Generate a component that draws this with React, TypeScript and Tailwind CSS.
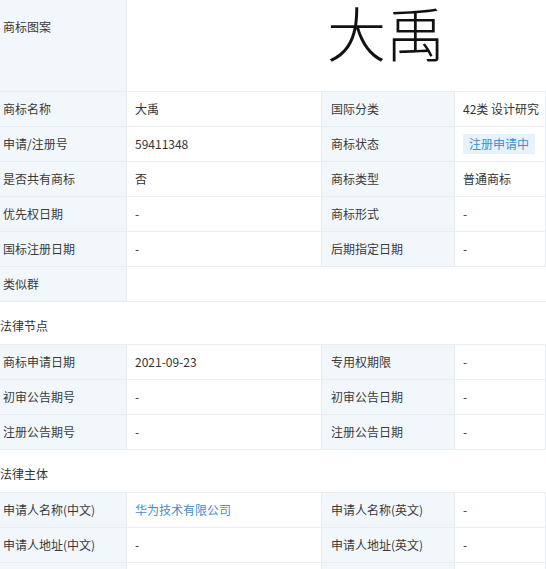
import React from "react";

const font = { fontFamily: '"Noto Sans CJK SC", "Noto Sans", sans-serif' };

function Label({ children, second }: { children?: React.ReactNode; second?: boolean }) {
  return (
    <div
      className={
        "flex h-[35px] items-center whitespace-nowrap border-b border-r border-[#e8edf2] bg-[#f2f7fc] text-[12px] text-[#3a3a3a] " +
        (second ? "pl-[9px]" : "pl-[3px]")
      }
    >
      {children}
    </div>
  );
}

function Value({ children, span }: { children?: React.ReactNode; span?: boolean }) {
  return (
    <div
      className={
        "flex h-[35px] items-center border-b border-[#e8edf2] bg-white pl-[8px] text-[12px] text-[#333] " +
        (span ? "col-span-3" : "border-r")
      }
    >
      {children}
    </div>
  );
}

function Section({ title }: { title: string }) {
  return (
    <div className="col-span-4 flex h-[43px] items-center border-b border-[#e8edf2] bg-white pt-[6px] text-[12px] text-[#333]">
      <span>{title}</span>
    </div>
  );
}

export default function App() {
  return (
    <div className="h-[569px] w-[546px] overflow-hidden bg-white" style={font}>
      <div className="grid grid-cols-[127px_195px_133px_91px]">
        <div className="h-[92px] border-b border-r border-[#e8edf2] bg-[#f2f7fc] pl-[3px] pt-[18px] text-[12px] leading-[18px] text-[#3a3a3a]">
          商标图案
        </div>
        <div className="col-span-3 h-[92px] border-b border-[#e8edf2] bg-white">
          <div className="ml-[200px] text-[59px] font-light leading-[64px] text-[#111]">
            大禹
          </div>
        </div>

        <Label>商标名称</Label>
        <Value>大禹</Value>
        <Label second>国际分类</Label>
        <Value>
          <span className="whitespace-nowrap">42类 设计研究</span>
        </Value>

        <Label>申请/注册号</Label>
        <Value>59411348</Value>
        <Label second>商标状态</Label>
        <Value>
          <span className="whitespace-nowrap bg-[#e8f2fb] px-[6px] py-[1px] text-[#3d8fcf]">注册申请中</span>
        </Value>

        <Label>是否共有商标</Label>
        <Value>否</Value>
        <Label second>商标类型</Label>
        <Value>普通商标</Value>

        <Label>优先权日期</Label>
        <Value>-</Value>
        <Label second>商标形式</Label>
        <Value>-</Value>

        <Label>国标注册日期</Label>
        <Value>-</Value>
        <Label second>后期指定日期</Label>
        <Value>-</Value>

        <Label>类似群</Label>
        <Value span />

        <Section title="法律节点" />

        <Label>商标申请日期</Label>
        <Value>2021-09-23</Value>
        <Label second>专用权期限</Label>
        <Value>-</Value>

        <Label>初审公告期号</Label>
        <Value>-</Value>
        <Label second>初审公告日期</Label>
        <Value>-</Value>

        <Label>注册公告期号</Label>
        <Value>-</Value>
        <Label second>注册公告日期</Label>
        <Value>-</Value>

        <Section title="法律主体" />

        <Label>申请人名称(中文)</Label>
        <Value>
          <span className="text-[#3d8fcf]">华为技术有限公司</span>
        </Value>
        <Label second>申请人名称(英文)</Label>
        <Value>-</Value>

        <Label>申请人地址(中文)</Label>
        <Value>-</Value>
        <Label second>申请人地址(英文)</Label>
        <Value>-</Value>

        <Label></Label>
        <Value></Value>
        <Label second></Label>
        <Value></Value>
      </div>
    </div>
  );
}
